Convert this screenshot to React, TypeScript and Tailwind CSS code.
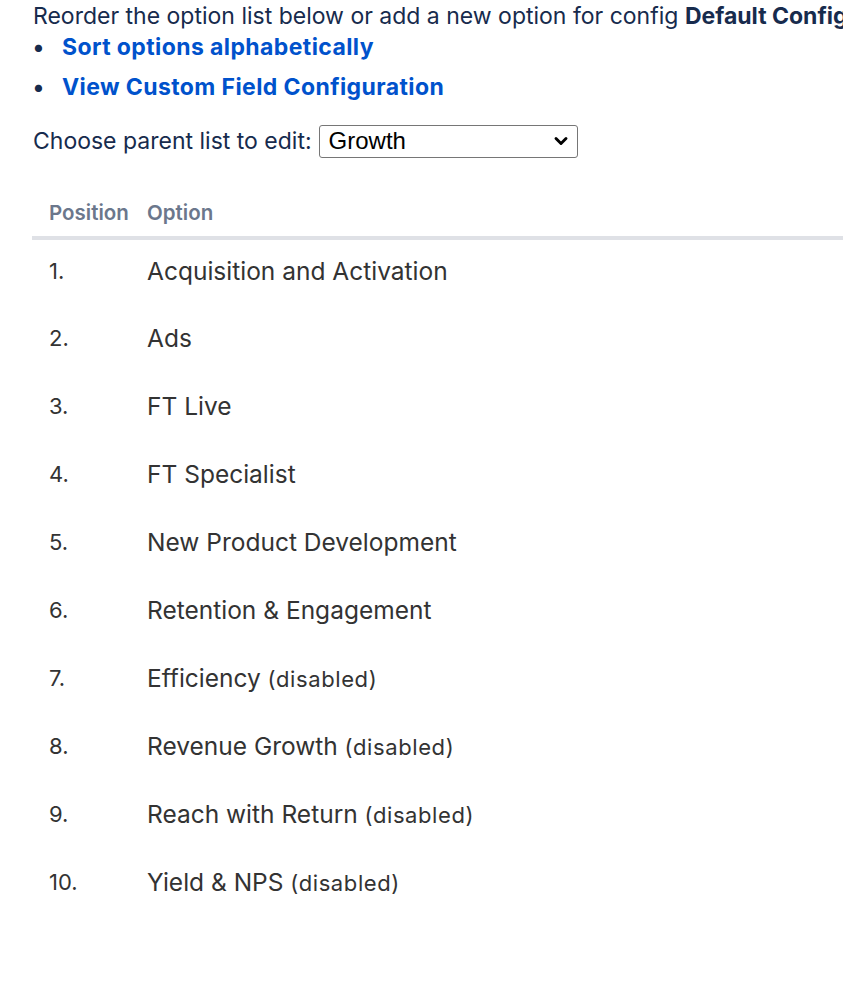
import { ChevronDown } from 'lucide-react';

const options: { label: string; disabled?: boolean }[] = [
    { label: 'Acquisition and Activation' },
    { label: 'Ads' },
    { label: 'FT Live' },
    { label: 'FT Specialist' },
    { label: 'New Product Development' },
    { label: 'Retention & Engagement' },
    { label: 'Efficiency', disabled: true },
    { label: 'Revenue Growth', disabled: true },
    { label: 'Reach with Return', disabled: true },
    { label: 'Yield & NPS', disabled: true },
];

export default function App() {
    return (
        <div className="min-h-screen bg-white pt-px pl-[33px] font-['Inter','Liberation_Sans',sans-serif] text-[#172b4d] overflow-hidden">
            <p className="text-[23px] leading-[30px] whitespace-nowrap">
                Reorder the option list below or add a new option for config <b className="font-bold">Default Config</b>
            </p>
            <ul className="flex flex-col gap-[8px] text-[23px] leading-[32px] font-bold tracking-[0.4px] text-[#0052cc]">
                <li className="flex items-center">
                    <span className="w-[29px] text-[#172b4d]">•</span>
                    <a href="#">Sort options alphabetically</a>
                </li>
                <li className="flex items-center">
                    <span className="w-[29px] text-[#172b4d]">•</span>
                    <a href="#">View Custom Field Configuration</a>
                </li>
            </ul>
            <div className="mt-[21px] flex items-center gap-[7px] text-[23px]">
                <label>Choose parent list to edit:</label>
                <div className="flex h-[33px] w-[259px] items-center justify-between rounded-[3px] border border-[#767676] pl-[9px] pr-[6px] font-['Liberation_Sans',sans-serif] text-[24px] text-black">
                    <span>Growth</span>
                    <ChevronDown className="h-[20px] w-[20px]" strokeWidth={3.5} />
                </div>
            </div>
            <table className="-ml-px mt-[40px] w-[calc(100%+40px)] border-collapse">
                <thead>
                    <tr className="border-b-[4px] border-[#dfe1e6] text-left text-[20.5px] leading-[28px] font-semibold text-[#6b778c]">
                        <th className="w-[115px] pl-[17px] pr-0 pb-[9px] font-semibold">Position</th>
                        <th className="pb-[9px] font-semibold">Option</th>
                    </tr>
                </thead>
                <tbody className="text-[24.5px] text-[#333333]">
                    {options.map((o, i) => (
                        <tr key={o.label} className="h-[68px] align-middle">
                            <td className="pl-[17px] pb-[2px] text-[22px]">{i + 1}.</td>
                            <td className="pb-[2px]">
                                {o.label}
                                {o.disabled && <span className="text-[22px] tracking-[0.6px]"> (disabled)</span>}
                            </td>
                        </tr>
                    ))}
                </tbody>
            </table>
        </div>
    );
}
